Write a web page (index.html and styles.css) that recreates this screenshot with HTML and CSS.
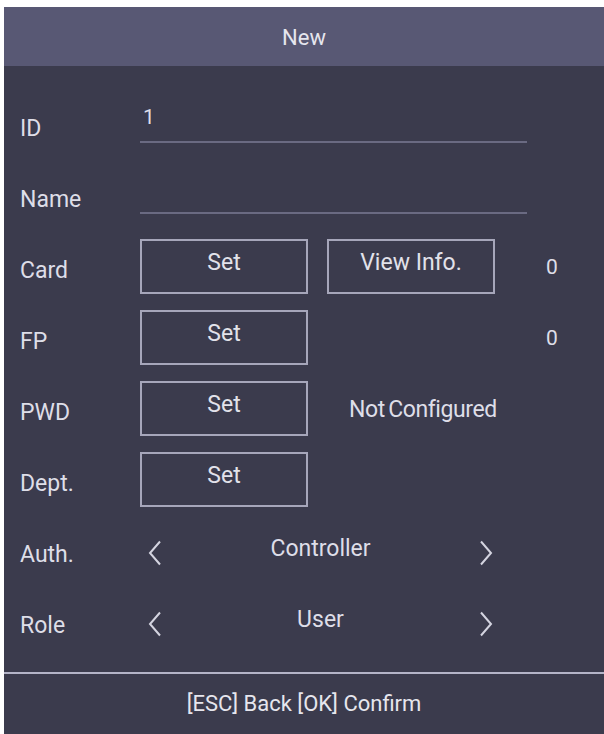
FILE: index.html
```html
<!DOCTYPE html>
<html lang="en">
<head>
<meta charset="utf-8">
<title>New</title>
<link rel="stylesheet" href="styles.css">
</head>
<body>
<div class="screen">
  <header class="title-bar">New</header>
  <main class="form">
    <div class="row">
      <span class="label">ID</span>
      <div class="field"><span class="value">1</span></div>
    </div>
    <div class="row">
      <span class="label">Name</span>
      <div class="field"></div>
    </div>
    <div class="row">
      <span class="label">Card</span>
      <div class="controls">
        <button class="btn">Set</button>
        <button class="btn">View Info.</button>
        <span class="count">0</span>
      </div>
    </div>
    <div class="row">
      <span class="label">FP</span>
      <div class="controls">
        <button class="btn">Set</button>
        <span class="spacer"></span>
        <span class="count">0</span>
      </div>
    </div>
    <div class="row">
      <span class="label">PWD</span>
      <div class="controls">
        <button class="btn">Set</button>
        <span class="status">Not Configured</span>
      </div>
    </div>
    <div class="row">
      <span class="label">Dept.</span>
      <div class="controls">
        <button class="btn">Set</button>
      </div>
    </div>
    <div class="row">
      <span class="label">Auth.</span>
      <div class="picker">
        <svg class="chev" viewBox="0 0 14 26"><polyline points="12,1.5 2,13 12,24.5"/></svg>
        <span class="pick-value">Controller</span>
        <svg class="chev" viewBox="0 0 14 26"><polyline points="2,1.5 12,13 2,24.5"/></svg>
      </div>
    </div>
    <div class="row">
      <span class="label">Role</span>
      <div class="picker">
        <svg class="chev" viewBox="0 0 14 26"><polyline points="12,1.5 2,13 12,24.5"/></svg>
        <span class="pick-value">User</span>
        <svg class="chev" viewBox="0 0 14 26"><polyline points="2,1.5 12,13 2,24.5"/></svg>
      </div>
    </div>
  </main>
  <footer class="hint-bar">[ESC] Back [OK] Confirm</footer>
</div>
</body>
</html>
```

FILE: styles.css
```css
html, body {
  margin: 0;
  padding: 0;
  background: #ffffff;
}

body {
  width: 604px;
  height: 734px;
  overflow: hidden;
  font-family: Roboto, "Liberation Sans", sans-serif;
  color: #dedee8;
}

.screen {
  margin: 7px 0 0 4px;
  height: 727px;
  background: #3b3b4d;
  display: flex;
  flex-direction: column;
}

.title-bar {
  height: 59px;
  flex: none;
  background: #585874;
  display: flex;
  align-items: center;
  justify-content: center;
  font-size: 22px;
  color: #e6e6ee;
  padding-top: 1px;
  box-sizing: border-box;
}

.form {
  flex: 1;
  padding: 26px 0 0 16px;
  display: flex;
  flex-direction: column;
}

.row {
  height: 71px;
  display: grid;
  grid-template-columns: 120px 1fr;
  align-items: center;
}

.label {
  font-size: 23px;
  padding-top: 1px;
}

.field {
  align-self: start;
  margin-top: 12px;
  width: 387px;
  height: 37px;
  border-bottom: 2px solid #6a6a82;
  box-sizing: content-box;
}

.value {
  display: block;
  padding-left: 3px;
  font-size: 21px;
  line-height: 26px;
}

.controls {
  display: flex;
  align-items: center;
  gap: 19px;
  margin-top: -6px;
}

.btn {
  width: 168px;
  height: 55px;
  margin: 0;
  padding: 0 0 8px;
  background: transparent;
  border: 2px solid #a6a6ba;
  color: #e2e2ea;
  font-family: inherit;
  font-size: 23px;
}

.spacer {
  width: 168px;
}

.count {
  margin-left: 32px;
  font-size: 21px;
}

.status {
  margin-left: 22px;
  font-size: 23px;
  letter-spacing: -0.4px;
  word-spacing: -2px;
  padding-top: 2px;
}

.picker {
  width: 345px;
  display: flex;
  align-items: center;
  justify-content: space-between;
  padding: 0 0 0 8px;
  margin-top: -2px;
}

.pick-value {
  font-size: 23px;
  margin-top: -8px;
}

.chev {
  width: 14px;
  height: 26px;
  fill: none;
  stroke: #d4d4e0;
  stroke-width: 2;
}

.hint-bar {
  height: 62px;
  flex: none;
  border-top: 2px solid #b4b4c8;
  display: flex;
  align-items: center;
  justify-content: center;
  font-size: 22px;
  color: #e6e6ee;
  padding-bottom: 2px;
  box-sizing: border-box;
}
```
